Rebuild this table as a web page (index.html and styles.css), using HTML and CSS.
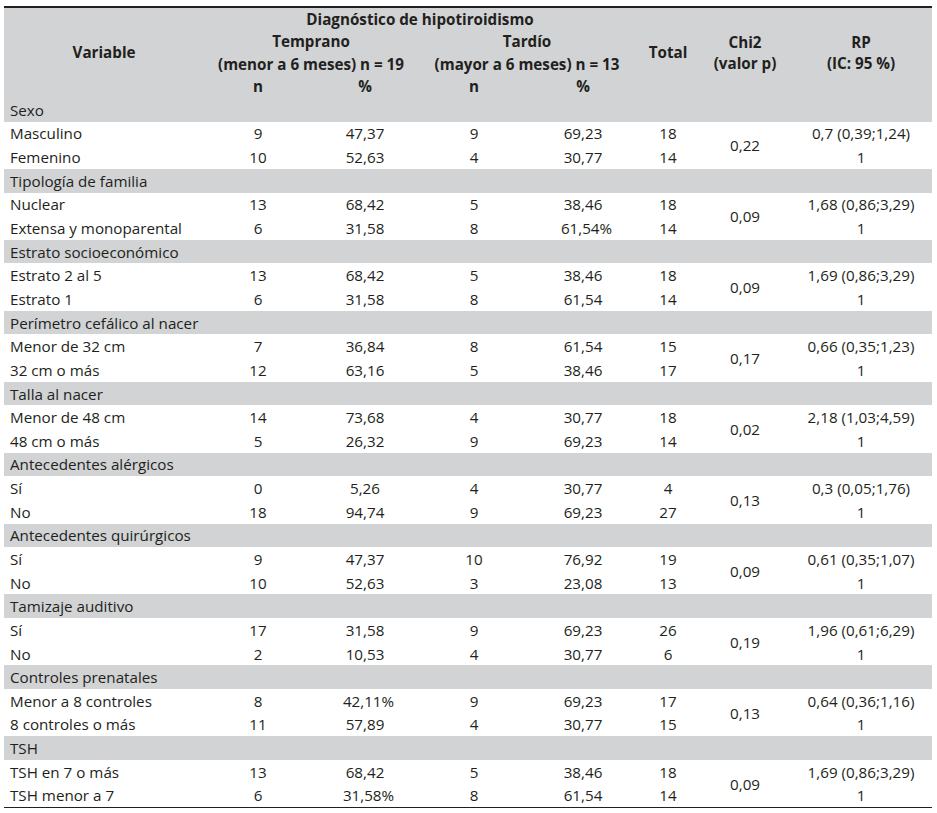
FILE: index.html
```html
<!DOCTYPE html>
<html lang="es">
<head>
<meta charset="utf-8">
<title>Diagnóstico de hipotiroidismo</title>
<link rel="stylesheet" href="styles.css">
</head>
<body>
<table class="tbl">
  <colgroup>
    <col class="c-var"><col class="c-n1"><col class="c-p1"><col class="c-n2"><col class="c-p2"><col class="c-tot"><col class="c-chi"><col class="c-rp">
  </colgroup>
  <thead>
    <tr>
      <th rowspan="4" class="h-var">Variable</th>
      <th colspan="4">Diagnóstico de hipotiroidismo</th>
      <th rowspan="4">Total</th>
      <th rowspan="4">Chi2<br>(valor p)</th>
      <th rowspan="4">RP<br>(IC: 95 %)</th>
    </tr>
    <tr><th colspan="2">Temprano</th><th colspan="2">Tardío</th></tr>
    <tr><th colspan="2">(menor a 6 meses) n = 19</th><th colspan="2">(mayor a 6 meses) n = 13</th></tr>
    <tr><th>n</th><th>%</th><th>n</th><th>%</th></tr>
  </thead>
  <tbody>
    <tr class="cat"><td colspan="8">Sexo</td></tr>
    <tr><td>Masculino</td><td>9</td><td>47,37</td><td>9</td><td>69,23</td><td>18</td><td rowspan="2">0,22</td><td>0,7 (0,39;1,24)</td></tr>
    <tr><td>Femenino</td><td>10</td><td>52,63</td><td>4</td><td>30,77</td><td>14</td><td>1</td></tr>

    <tr class="cat"><td colspan="8">Tipología de familia</td></tr>
    <tr><td>Nuclear</td><td>13</td><td>68,42</td><td>5</td><td>38,46</td><td>18</td><td rowspan="2">0,09</td><td>1,68 (0,86;3,29)</td></tr>
    <tr><td>Extensa y monoparental</td><td>6</td><td>31,58</td><td>8</td><td>61,54<span class="pc">%</span></td><td>14</td><td>1</td></tr>

    <tr class="cat"><td colspan="8">Estrato socioeconómico</td></tr>
    <tr><td>Estrato 2 al 5</td><td>13</td><td>68,42</td><td>5</td><td>38,46</td><td>18</td><td rowspan="2">0,09</td><td>1,69 (0,86;3,29)</td></tr>
    <tr><td>Estrato 1</td><td>6</td><td>31,58</td><td>8</td><td>61,54</td><td>14</td><td>1</td></tr>

    <tr class="cat"><td colspan="8">Perímetro cefálico al nacer</td></tr>
    <tr><td>Menor de 32 cm</td><td>7</td><td>36,84</td><td>8</td><td>61,54</td><td>15</td><td rowspan="2">0,17</td><td>0,66 (0,35;1,23)</td></tr>
    <tr><td>32 cm o más</td><td>12</td><td>63,16</td><td>5</td><td>38,46</td><td>17</td><td>1</td></tr>

    <tr class="cat"><td colspan="8">Talla al nacer</td></tr>
    <tr><td>Menor de 48 cm</td><td>14</td><td>73,68</td><td>4</td><td>30,77</td><td>18</td><td rowspan="2">0,02</td><td>2,18 (1,03;4,59)</td></tr>
    <tr><td>48 cm o más</td><td>5</td><td>26,32</td><td>9</td><td>69,23</td><td>14</td><td>1</td></tr>

    <tr class="cat"><td colspan="8">Antecedentes alérgicos</td></tr>
    <tr><td>Sí</td><td>0</td><td>5,26</td><td>4</td><td>30,77</td><td>4</td><td rowspan="2">0,13</td><td>0,3 (0,05;1,76)</td></tr>
    <tr><td>No</td><td>18</td><td>94,74</td><td>9</td><td>69,23</td><td>27</td><td>1</td></tr>

    <tr class="cat"><td colspan="8">Antecedentes quirúrgicos</td></tr>
    <tr><td>Sí</td><td>9</td><td>47,37</td><td>10</td><td>76,92</td><td>19</td><td rowspan="2">0,09</td><td>0,61 (0,35;1,07)</td></tr>
    <tr><td>No</td><td>10</td><td>52,63</td><td>3</td><td>23,08</td><td>13</td><td>1</td></tr>

    <tr class="cat"><td colspan="8">Tamizaje auditivo</td></tr>
    <tr><td>Sí</td><td>17</td><td>31,58</td><td>9</td><td>69,23</td><td>26</td><td rowspan="2">0,19</td><td>1,96 (0,61;6,29)</td></tr>
    <tr><td>No</td><td>2</td><td>10,53</td><td>4</td><td>30,77</td><td>6</td><td>1</td></tr>

    <tr class="cat"><td colspan="8">Controles prenatales</td></tr>
    <tr><td>Menor a 8 controles</td><td>8</td><td>42,11<span class="pc">%</span></td><td>9</td><td>69,23</td><td>17</td><td rowspan="2">0,13</td><td>0,64 (0,36;1,16)</td></tr>
    <tr><td>8 controles o más</td><td>11</td><td>57,89</td><td>4</td><td>30,77</td><td>15</td><td>1</td></tr>

    <tr class="cat"><td colspan="8">TSH</td></tr>
    <tr><td>TSH en 7 o más</td><td>13</td><td>68,42</td><td>5</td><td>38,46</td><td>18</td><td rowspan="2">0,09</td><td>1,69 (0,86;3,29)</td></tr>
    <tr><td>TSH menor a 7</td><td>6</td><td>31,58<span class="pc">%</span></td><td>8</td><td>61,54</td><td>14</td><td>1</td></tr>
  </tbody>
</table>
</body>
</html>
```

FILE: styles.css
```css
html, body {
  margin: 0;
  padding: 0;
  background: #ffffff;
}

body {
  padding: 6px 5px 0 4px;
  font-family: "Open Sans", "Noto Sans", sans-serif;
  font-size: 15.2px;
  color: #231f20;
}

.tbl {
  width: 928px;
  table-layout: fixed;
  border-collapse: collapse;
  border-top: 2px solid #231f20;
  border-bottom: 1.5px solid #231f20;
}

.c-var { width: 200px; }
.c-n1 { width: 108px; }
.c-p1 { width: 106px; }
.c-n2 { width: 112px; }
.c-p2 { width: 106px; }
.c-tot { width: 64px; }
.c-chi { width: 90px; }
.c-rp { width: 142px; }

.tbl th {
  background: #d1d3d4;
  font-weight: 700;
  text-align: center;
  vertical-align: middle;
  padding: 0;
  height: 22.5px;
  line-height: 21.5px;
  white-space: nowrap;
}

.tbl td {
  padding: 0;
  height: 23.65px;
  line-height: 20px;
  font-weight: 500;
  text-align: center;
  vertical-align: middle;
  white-space: nowrap;
}

.tbl td:first-child {
  text-align: left;
  padding-left: 6px;
}

.tbl tr.cat td {
  background: #d1d3d4;
}

.pc {
  margin-right: -7px;
}
```
